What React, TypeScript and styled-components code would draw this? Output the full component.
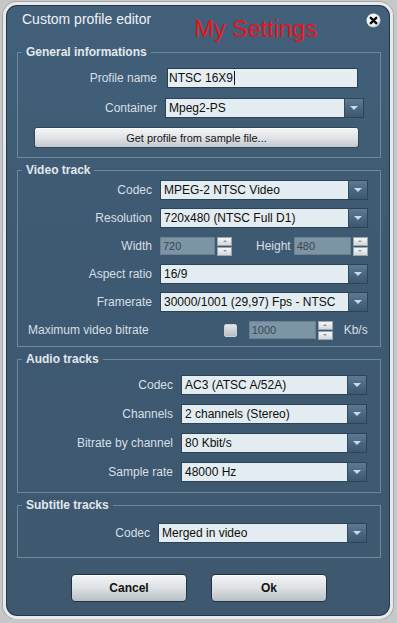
import React, { FC } from "react";
import styled, { createGlobalStyle } from "styled-components";

const GlobalStyle = createGlobalStyle`
  html, body {
    margin: 0;
    padding: 0;
    background: #c6c7c8;
  }
  body {
    padding: 2px 4px 0 3px;
    font-family: "Liberation Sans", Arial, sans-serif;
  }
  * {
    box-sizing: border-box;
  }
`;

type RowData = { label: string; value: string };

const videoTop: RowData[] = [
  { label: "Codec", value: "MPEG-2 NTSC Video" },
  { label: "Resolution", value: "720x480 (NTSC Full D1)" },
];

const videoBottom: RowData[] = [
  { label: "Aspect ratio", value: "16/9" },
  { label: "Framerate", value: "30000/1001 (29,97) Fps - NTSC" },
];

const audioRows: RowData[] = [
  { label: "Codec", value: "AC3 (ATSC A/52A)" },
  { label: "Channels", value: "2 channels (Stereo)" },
  { label: "Bitrate by channel", value: "80 Kbit/s" },
  { label: "Sample rate", value: "48000 Hz" },
];

const Select: FC<{ value: string }> = ({ value }) => (
  <SelectBox>
    <SelectValue>{value}</SelectValue>
    <SelectArrow>
      <ArrowGlyph />
    </SelectArrow>
  </SelectBox>
);

const Spinner: FC = () => (
  <SpinBox>
    <SpinHalf>
      <SpinUp />
    </SpinHalf>
    <SpinHalf>
      <SpinDown />
    </SpinHalf>
  </SpinBox>
);

const CloseIcon: FC = () => (
  <svg width="15" height="15" viewBox="0 0 15 15">
    <defs>
      <radialGradient id="cg" cx="40%" cy="35%" r="70%">
        <stop offset="0%" stopColor="#ffffff" />
        <stop offset="70%" stopColor="#eceef0" />
        <stop offset="100%" stopColor="#a9b2ba" />
      </radialGradient>
    </defs>
    <circle cx="7.5" cy="7.5" r="7" fill="url(#cg)" />
    <path
      d="M4.8 4.8 L10.2 10.2 M10.2 4.8 L4.8 10.2"
      stroke="#0c0c0c"
      strokeWidth="2.4"
      strokeLinecap="round"
    />
  </svg>
);

const App: FC = () => {
  return (
    <>
      <GlobalStyle />
      <Window>
        <TitleBar>
          <Title>Custom profile editor</Title>
          <Annotation>My Settings</Annotation>
          <CloseButton>
            <CloseIcon />
          </CloseButton>
        </TitleBar>

        <Group $top={9} $bottom={9} $right={16}>
          <Legend>General informations</Legend>
          <Grid $labelW={139} $gap={10}>
            <Label>Profile name</Label>
            <TextInput>
              NTSC 16X9
              <Caret />
            </TextInput>
            <Label>Container</Label>
            <Select value="Mpeg2-PS" />
            <FullRow>
              <WideButton>Get profile from sample file...</WideButton>
            </FullRow>
          </Grid>
        </Group>

        <Group $top={3} $bottom={6} $right={16}>
          <Legend>Video track</Legend>
          <Grid $labelW={134} $gap={8}>
            {videoTop.map((r) => (
              <React.Fragment key={r.label}>
                <Label>{r.label}</Label>
                <Select value={r.value} />
              </React.Fragment>
            ))}
            <Label>Width</Label>
            <SizeRow>
              <NumberField $w={55}>720</NumberField>
              <Spinner />
              <InlineLabel $ml={24}>Height</InlineLabel>
              <NumberField $w={57}>480</NumberField>
              <Spinner />
            </SizeRow>
            {videoBottom.map((r) => (
              <React.Fragment key={r.label}>
                <Label>{r.label}</Label>
                <Select value={r.value} />
              </React.Fragment>
            ))}
            <FullRow>
              <BitrateLabel>Maximum video bitrate</BitrateLabel>
              <BitrateControls>
                <Checkbox />
                <NumberField $w={67}>1000</NumberField>
                <Spinner />
                <Unit>Kb/s</Unit>
              </BitrateControls>
            </FullRow>
          </Grid>
        </Group>

        <Group $top={9} $bottom={10} $right={13}>
          <Legend>Audio tracks</Legend>
          <Grid $labelW={155} $gap={9}>
            {audioRows.map((r) => (
              <React.Fragment key={r.label}>
                <Label>{r.label}</Label>
                <Select value={r.value} />
              </React.Fragment>
            ))}
          </Grid>
        </Group>

        <Group $top={11} $bottom={14} $right={13}>
          <Legend>Subtitle tracks</Legend>
          <Grid $labelW={132} $gap={8}>
            <Label>Codec</Label>
            <Select value="Merged in video" />
          </Grid>
        </Group>

        <Footer>
          <DialogButton>Cancel</DialogButton>
          <DialogButton>Ok</DialogButton>
        </Footer>
      </Window>
    </>
  );
};

export default App;

const Window = styled.div`
  width: 390px;
  border: 3px solid #e8e9ea;
  border-radius: 14px;
  background: linear-gradient(180deg, #42607a 0%, #3e5a72 40%, #3d586f 100%);
  box-shadow: inset 0 0 0 1px #263646, 0 0 0 1px #a3a6a9;
  padding: 0 9px 14px 11px;
  display: flex;
  flex-direction: column;
`;

const TitleBar = styled.div`
  height: 40px;
  display: flex;
  align-items: flex-start;
  padding-top: 6px;
`;

const Title = styled.div`
  margin-left: 5px;
  font-size: 14px;
  line-height: 16px;
  color: #eef2f5;
`;

const Annotation = styled.div`
  margin: 5px 0 0 43px;
  font-family: Arial, "Liberation Sans", sans-serif;
  font-size: 23.5px;
  line-height: 26px;
  color: #e8141b;
`;

const CloseButton = styled.div`
  margin: 2px 0 0 auto;
  width: 15px;
  height: 15px;
  display: flex;
`;

const Group = styled.fieldset<{ $top: number; $bottom: number; $right: number }>`
  margin: 0 0 5px 0;
  border: 1px solid #6f879a;
  padding: ${(p) => p.$top}px ${(p) => p.$right}px ${(p) => p.$bottom}px 0;
  min-width: 0;
`;

const Legend = styled.legend`
  margin-left: 4px;
  padding: 0 4px;
  font-size: 12px;
  line-height: 14px;
  font-weight: bold;
  color: #e2e8ed;
`;

const Grid = styled.div<{ $labelW: number; $gap: number }>`
  display: grid;
  grid-template-columns: ${(p) => p.$labelW}px 1fr;
  column-gap: 8px;
  row-gap: ${(p) => p.$gap}px;
  grid-auto-rows: 20px;
`;

const Label = styled.div`
  align-self: center;
  text-align: right;
  font-size: 12px;
  color: #d7dfe6;
  white-space: nowrap;
`;

const FullRow = styled.div`
  grid-column: 1 / -1;
  display: flex;
  align-items: center;
`;

const SelectBox = styled.div`
  display: flex;
  height: 20px;
  border: 1px solid #2d4356;
  background: #e3ecf0;
  overflow: hidden;
`;

const SelectValue = styled.div`
  flex: 1;
  min-width: 0;
  padding-left: 3px;
  font-size: 12px;
  line-height: 18px;
  color: #0e0e0e;
  white-space: nowrap;
  overflow: hidden;
`;

const SelectArrow = styled.div`
  width: 19px;
  flex: none;
  display: flex;
  align-items: center;
  justify-content: center;
  background: linear-gradient(180deg, #5c7a95 0%, #48667f 55%, #3c5870 100%);
  border-left: 1px solid #34495c;
`;

const ArrowGlyph = styled.span`
  width: 0;
  height: 0;
  border-left: 4px solid transparent;
  border-right: 4px solid transparent;
  border-top: 4px solid #cfd9e2;
`;

const TextInput = styled.div`
  margin: 0 6px 0 2px;
  height: 20px;
  display: flex;
  align-items: center;
  padding-left: 1px;
  border: 1px solid #2b3f52;
  background: #e6eef2;
  font-size: 12px;
  color: #0e0e0e;
`;

const Caret = styled.span`
  width: 1px;
  height: 14px;
  margin-left: 1px;
  background: #111;
`;

const WideButton = styled.div`
  flex: 1;
  margin: 0 5px 1px 16px;
  height: 21px;
  display: flex;
  align-items: center;
  justify-content: center;
  border: 1px solid #31475a;
  border-radius: 3px;
  background: linear-gradient(180deg, #f4f5f6 0%, #e1e4e7 50%, #c2c8cd 100%);
  box-shadow: inset 0 1px 0 #ffffff;
  font-size: 11px;
  color: #141414;
`;

const SizeRow = styled.div`
  display: flex;
  align-items: center;
`;

const InlineLabel = styled.span<{ $ml: number }>`
  margin: 0 3px 0 ${(p) => p.$ml}px;
  font-size: 12px;
  color: #d7dfe6;
`;

const NumberField = styled.div<{ $w: number }>`
  width: ${(p) => p.$w}px;
  height: 18px;
  padding-left: 2px;
  display: flex;
  align-items: center;
  background: #7d94a4;
  border: 1px solid #6b8294;
  font-size: 11px;
  color: #3a4957;
`;

const SpinBox = styled.div`
  margin-left: 2px;
  width: 15px;
  height: 19px;
  display: flex;
  flex-direction: column;
  gap: 1px;
`;

const SpinHalf = styled.div`
  flex: 1;
  display: flex;
  align-items: center;
  justify-content: center;
  border: 1px solid #9aa6b0;
  background: linear-gradient(180deg, #f6f6f6 0%, #d4d8db 100%);
`;

const SpinUp = styled.span`
  width: 0;
  height: 0;
  border-left: 2px solid transparent;
  border-right: 2px solid transparent;
  border-bottom: 2px solid #8d959c;
`;

const SpinDown = styled(SpinUp)`
  border-bottom: none;
  border-top: 2px solid #8d959c;
`;

const BitrateLabel = styled.span`
  padding-left: 10px;
  font-size: 12px;
  color: #d7dfe6;
`;

const BitrateControls = styled.div`
  margin-left: auto;
  display: flex;
  align-items: center;
`;

const Checkbox = styled.span`
  width: 13px;
  height: 13px;
  margin-right: 12px;
  border: 1px solid #c9d0d6;
  border-radius: 2px;
  background: linear-gradient(180deg, #e4e7ea 0%, #b6bdc3 100%);
`;

const Unit = styled.span`
  margin-left: 11px;
  font-size: 12px;
  color: #d7dfe6;
`;

const Footer = styled.div`
  margin-top: 11px;
  display: flex;
  justify-content: center;
  gap: 24px;
`;

const DialogButton = styled.div`
  width: 116px;
  height: 28px;
  display: flex;
  align-items: center;
  justify-content: center;
  border: 1px solid #23323f;
  border-radius: 4px;
  background: linear-gradient(180deg, #f3f4f5 0%, #dde1e4 50%, #b8bfc5 100%);
  box-shadow: inset 0 1px 0 #ffffff;
  font-size: 12px;
  font-weight: bold;
  color: #121212;
`;
